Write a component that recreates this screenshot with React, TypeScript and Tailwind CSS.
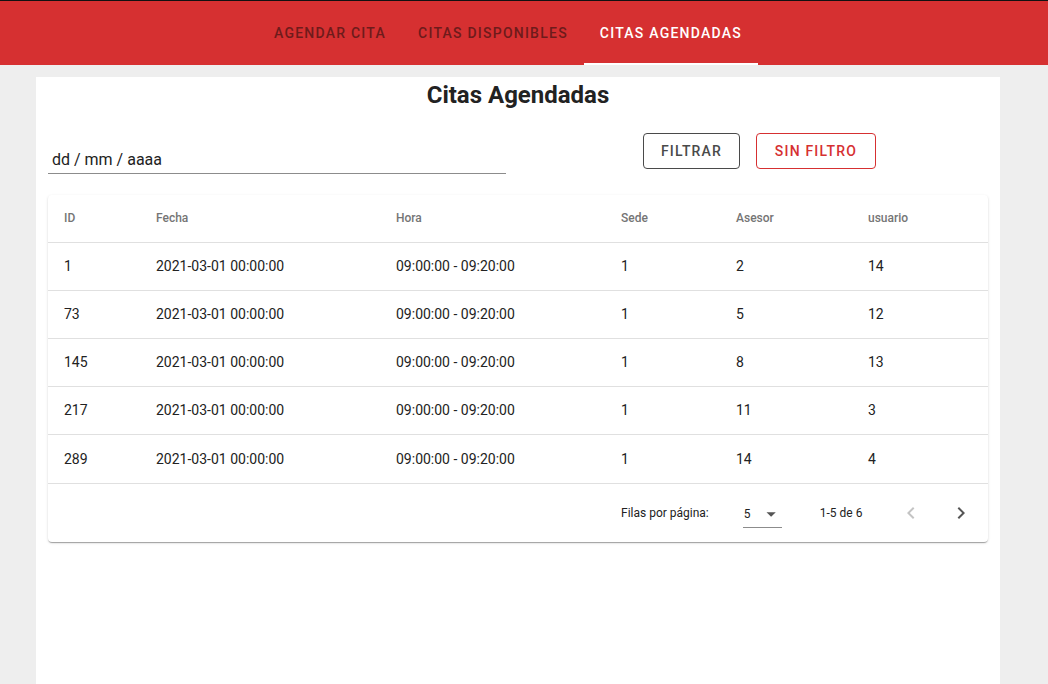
import React from "react";

const tabs = ["AGENDAR CITA", "CITAS DISPONIBLES", "CITAS AGENDADAS"];

const rows = [
  { id: 1, asesor: 2, usuario: 14 },
  { id: 73, asesor: 5, usuario: 12 },
  { id: 145, asesor: 8, usuario: 13 },
  { id: 217, asesor: 11, usuario: 3 },
  { id: 289, asesor: 14, usuario: 4 },
];

const cols = "grid grid-cols-[92px_240px_225px_115px_132px_1fr] items-center pl-[16px]";

const ChevronLeft = ({ className }: { className?: string }) => (
  <svg viewBox="0 0 24 24" width="24" height="24" className={className}>
    <path fill="currentColor" d="M15.41 7.41 14 6l-6 6 6 6 1.41-1.41L10.83 12z" />
  </svg>
);

const ChevronRight = ({ className }: { className?: string }) => (
  <svg viewBox="0 0 24 24" width="24" height="24" className={className}>
    <path fill="currentColor" d="M10 6 8.59 7.41 13.17 12l-4.58 4.59L10 18l6-6z" />
  </svg>
);

export default function App() {
  return (
    <div className="min-h-[684px] bg-[#eeeeee] font-['Roboto',sans-serif] overflow-hidden">
      <header className="border-t border-[#111111] bg-[#d63031] h-[65px]">
        <nav className="flex justify-center pr-[32px] h-[64px]">
          {tabs.map((t, i) => {
            const active = i === 2;
            return (
              <div
                key={t}
                className={`relative flex items-center px-[16px] text-[14px] font-medium tracking-[0.088em] ${
                  active ? "text-white" : "text-[#6e1b1b]"
                }`}
              >
                {t}
                {active && <span className="absolute left-0 right-0 bottom-0 h-[2px] bg-white" />}
              </div>
            );
          })}
        </nav>
      </header>

      <main className="ml-[36px] mr-[48px] mt-[12px] bg-white h-[607px] px-[12px] pt-[2px]">
        <h1 className="text-center text-[24px] leading-[32px] font-bold text-[#222222]">Citas Agendadas</h1>

        <div className="flex items-start mt-[22px]">
          <div className="w-[458px] h-[32px] mt-[9px] border-b border-[#8c8c8c] pt-[8px] pl-[4px] text-[16px] leading-[19px] text-[#222222]">
            dd / mm / aaaa
          </div>
          <button className="ml-[137px] h-[36px] px-[17px] rounded-[4px] border border-[#4a4a4a] text-[#4a4a4a] text-[14px] font-medium tracking-[0.08em]">
            FILTRAR
          </button>
          <button className="ml-[16px] h-[36px] px-[18px] rounded-[4px] border border-[#d63031] text-[#d63031] text-[14px] font-medium tracking-[0.085em]">
            SIN FILTRO
          </button>
        </div>

        <div className="mt-[21px] rounded-[4px] bg-white shadow-[0_2px_1px_-1px_rgba(0,0,0,0.2),0_1px_1px_0_rgba(0,0,0,0.14),0_1px_3px_0_rgba(0,0,0,0.12)]">
          <div className={`${cols} h-[48px] pb-[2px] border-b border-[#e0e0e0] text-[12px] font-medium text-[#757575]`}>
            <span>ID</span>
            <span>Fecha</span>
            <span>Hora</span>
            <span>Sede</span>
            <span>Asesor</span>
            <span>usuario</span>
          </div>
          {rows.map((r, i) => (
            <div
              key={r.id}
              className={`${cols} ${i === rows.length - 1 ? "h-[49px] pt-[1px]" : "h-[48px]"} border-b border-[#e0e0e0] text-[14px] text-[#222222]`}
            >
              <span>{r.id}</span>
              <span>2021-03-01 00:00:00</span>
              <span>09:00:00 - 09:20:00</span>
              <span>1</span>
              <span>{r.asesor}</span>
              <span>{r.usuario}</span>
            </div>
          ))}
          <div className="flex items-center h-[58px] pl-[573px] text-[12px] text-[#222222]">
            <span>Filas por página:</span>
            <div className="ml-[34px] flex items-center w-[39px] h-[28px] border-b border-[#8c8c8c] mt-[2px]">
              <span className="pl-[1px]">5</span>
              <svg viewBox="0 0 24 24" width="24" height="24" className="ml-[9px] text-[#555555]">
                <path fill="currentColor" d="M7 10l5 5 5-5z" />
              </svg>
            </div>
            <span className="ml-[38px]">1-5 de 6</span>
            <ChevronLeft className="ml-[37px] text-[#c4c4c4]" />
            <ChevronRight className="ml-[26px] text-[#555555]" />
          </div>
        </div>
      </main>
    </div>
  );
}
